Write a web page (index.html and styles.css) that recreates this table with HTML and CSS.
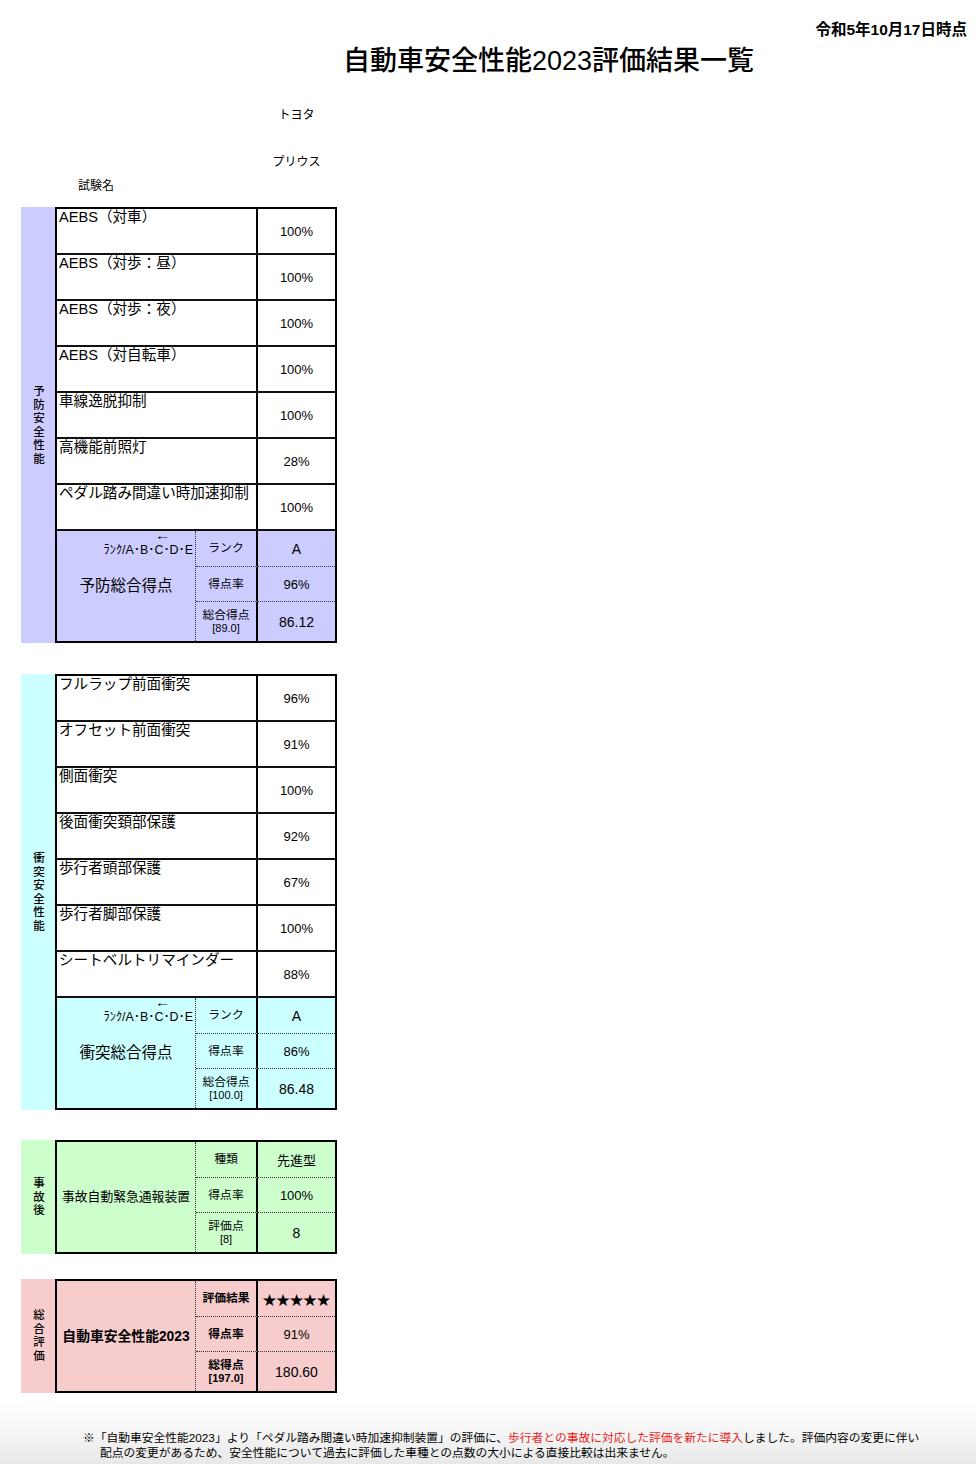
FILE: index.html
```html
<!DOCTYPE html>
<html lang="ja">
<head>
<meta charset="utf-8">
<title>自動車安全性能2023評価結果一覧</title>
<link rel="stylesheet" href="styles.css">
</head>
<body>
<div class="page">
  <div class="date">令和5年10月17日時点</div>
  <h1 class="title">自動車安全性能2023評価結果一覧</h1>
  <div class="maker">トヨタ</div>
  <div class="model">プリウス</div>
  <div class="testname">試験名</div>

  <div class="section sec-prev">
    <div class="side"><span>予防安全性能</span></div>
    <div class="tbl">
      <div class="row"><div class="name">AEBS（対車）</div><div class="val">100%</div></div>
      <div class="row"><div class="name">AEBS（対歩：昼）</div><div class="val">100%</div></div>
      <div class="row"><div class="name">AEBS（対歩：夜）</div><div class="val">100%</div></div>
      <div class="row"><div class="name">AEBS（対自転車）</div><div class="val">100%</div></div>
      <div class="row"><div class="name">車線逸脱抑制</div><div class="val">100%</div></div>
      <div class="row"><div class="name">高機能前照灯</div><div class="val">28%</div></div>
      <div class="row"><div class="name">ペダル踏み間違い時加速抑制</div><div class="val">100%</div></div>
      <div class="summary">
        <div class="sum-left">
          <div class="hint"><span class="arrow">←</span><span class="hint-text">ﾗﾝｸ/A･B･C･D･E</span></div>
          <div class="sum-title">予防総合得点</div>
        </div>
        <div class="lab r1">ランク</div><div class="v r1 big">A</div>
        <div class="lab r2">得点率</div><div class="v r2">96%</div>
        <div class="lab r3"><span>総合得点</span><span class="sub">[89.0]</span></div><div class="v r3 big">86.12</div>
      </div>
    </div>
  </div>

  <div class="section sec-crash">
    <div class="side"><span>衝突安全性能</span></div>
    <div class="tbl">
      <div class="row"><div class="name">フルラップ前面衝突</div><div class="val">96%</div></div>
      <div class="row"><div class="name">オフセット前面衝突</div><div class="val">91%</div></div>
      <div class="row"><div class="name">側面衝突</div><div class="val">100%</div></div>
      <div class="row"><div class="name">後面衝突頚部保護</div><div class="val">92%</div></div>
      <div class="row"><div class="name">歩行者頭部保護</div><div class="val">67%</div></div>
      <div class="row"><div class="name">歩行者脚部保護</div><div class="val">100%</div></div>
      <div class="row"><div class="name">シートベルトリマインダー</div><div class="val">88%</div></div>
      <div class="summary">
        <div class="sum-left">
          <div class="hint"><span class="arrow">←</span><span class="hint-text">ﾗﾝｸ/A･B･C･D･E</span></div>
          <div class="sum-title">衝突総合得点</div>
        </div>
        <div class="lab r1">ランク</div><div class="v r1 big">A</div>
        <div class="lab r2">得点率</div><div class="v r2">86%</div>
        <div class="lab r3"><span>総合得点</span><span class="sub">[100.0]</span></div><div class="v r3 big">86.48</div>
      </div>
    </div>
  </div>

  <div class="section sec-post">
    <div class="side"><span>事故後</span></div>
    <div class="tbl">
      <div class="summary">
        <div class="sum-left"><div class="sum-title small">事故自動緊急通報装置</div></div>
        <div class="lab r1">種類</div><div class="v r1">先進型</div>
        <div class="lab r2">得点率</div><div class="v r2">100%</div>
        <div class="lab r3"><span>評価点</span><span class="sub">[8]</span></div><div class="v r3 big">8</div>
      </div>
    </div>
  </div>

  <div class="section sec-total">
    <div class="side"><span>総合評価</span></div>
    <div class="tbl">
      <div class="summary">
        <div class="sum-left"><div class="sum-title small bold wide">自動車安全性能2023</div></div>
        <div class="lab r1 bold">評価結果</div><div class="v r1 stars">★★★★★</div>
        <div class="lab r2 bold">得点率</div><div class="v r2">91%</div>
        <div class="lab r3 bold"><span>総得点</span><span class="sub">[197.0]</span></div><div class="v r3 big">180.60</div>
      </div>
    </div>
  </div>

  <div class="footnote">
    <span class="fn-line">※「自動車安全性能2023」より「ペダル踏み間違い時加速抑制装置」の評価に、<span class="red">歩行者との事故に対応した評価を新たに導入</span>しました。評価内容の変更に伴い</span>
    <span class="fn-line indent">配点の変更があるため、安全性能について過去に評価した車種との点数の大小による直接比較は出来ません。</span>
  </div>
</div>
</body>
</html>
```

FILE: styles.css
```css
html, body {
  margin: 0;
  padding: 0;
  background: #fff;
}
body {
  font-family: "Liberation Sans", "Noto Sans CJK JP", sans-serif;
  color: #000;
}
.page {
  width: 976px;
  height: 1464px;
  overflow: hidden;
}
.date {
  padding-top: 20px;
  height: 20px;
  line-height: 20px;
  font-size: 15.5px;
  font-weight: bold;
  text-align: right;
  padding-right: 9px;
}
.title {
  margin: 4px 0 0 0;
  height: 34px;
  line-height: 34px;
  font-size: 27px;
  font-weight: 500;
  padding-left: 343px;
}
.maker, .model {
  margin-left: 258px;
  width: 77px;
  text-align: center;
  font-size: 12px;
  line-height: 16px;
  height: 16px;
}
.maker { margin-top: 29px; }
.model { margin-top: 31px; }
.testname {
  margin-top: 8px;
  padding-left: 78px;
  font-size: 12px;
  line-height: 16px;
  height: 16px;
}

.section {
  display: flex;
  margin-left: 21px;
}
.sec-prev { margin-top: 13px; }
.sec-crash { margin-top: 31px; }
.sec-post { margin-top: 30px; }
.sec-total { margin-top: 25px; }

.side {
  width: 34px;
  display: flex;
  align-items: center;
  justify-content: center;
  font-size: 11.5px;
  font-weight: 500;
}
.side span {
  writing-mode: vertical-rl;
  text-orientation: upright;
  letter-spacing: 2px;
}
.sec-prev .side, .sec-prev .summary { background: #ccccff; }
.sec-crash .side, .sec-crash .summary { background: #ccffff; }
.sec-post .side, .sec-post .summary { background: #ccffcc; }
.sec-total .side, .sec-total .summary { background: #f6cccd; }

.tbl {
  width: 282px;
  box-sizing: border-box;
  border: 2px solid #000;
  background: #fff;
}
.row {
  display: grid;
  grid-template-columns: 201px 1fr;
  height: 46px;
  box-sizing: border-box;
  border-bottom: 2px solid #111;
}
.name {
  border-right: 2px solid #000;
  font-size: 14.6px;
  line-height: 16px;
  padding-left: 2px;
  white-space: nowrap;
  overflow: hidden;
}
.val {
  display: flex;
  align-items: center;
  justify-content: center;
  font-size: 13px;
  padding-top: 1px;
}

.summary {
  display: grid;
  grid-template-columns: 139px 62px 1fr;
  grid-template-rows: 36px 35px 1fr;
  height: 110px;
}
.sum-left {
  grid-column: 1;
  grid-row: 1 / 4;
  border-right: 1px dotted #333;
  display: grid;
}
.hint {
  grid-area: 1 / 1;
  align-self: start;
  justify-self: end;
  display: flex;
  flex-direction: column;
  align-items: flex-end;
  padding-right: 2px;
}
.arrow {
  font-family: "Liberation Sans", sans-serif;
  font-size: 13px;
  line-height: 8px;
  margin-top: 1px;
  padding-right: 22px;
  transform: scaleX(1.2);
}
.hint-text {
  font-size: 12.4px;
  line-height: 14px;
  margin-top: 3px;
}
.sum-title {
  grid-area: 1 / 1;
  align-self: center;
  justify-self: center;
  font-size: 15.5px;
  margin-top: -4px;
}
.sum-title.small {
  font-size: 12.8px;
  margin-top: -3px;
}
.sum-title.wide {
  font-size: 13.8px;
}
.bold { font-weight: bold; }
.lab {
  grid-column: 2;
  border-right: 2px solid #000;
  display: flex;
  flex-direction: column;
  align-items: center;
  justify-content: center;
  font-size: 11.8px;
  line-height: 13px;
}
.lab .sub {
  font-size: 11px;
  font-weight: normal;
}
.lab.bold .sub { font-weight: bold; }
.v {
  grid-column: 3;
  display: flex;
  align-items: center;
  justify-content: center;
  font-size: 13px;
}
.v.big { font-size: 14px; }
.v.stars { font-size: 13.5px; letter-spacing: 0; }
.r1 { grid-row: 1; border-bottom: 1px dotted #333; }
.r2 { grid-row: 2; border-bottom: 1px dotted #333; }
.r3 { grid-row: 3; }

.footnote {
  margin-top: 7px;
  height: 64px;
  box-sizing: border-box;
  padding: 30px 0 0 83px;
  background: linear-gradient(to bottom, #ffffff 0%, #f3f3f3 60%, #e8e8e8 100%);
  font-size: 11.75px;
  line-height: 15px;
}
.fn-line {
  display: block;
  white-space: nowrap;
}
.fn-line.indent { padding-left: 17px; }
.red { color: #e8231b; }
```
